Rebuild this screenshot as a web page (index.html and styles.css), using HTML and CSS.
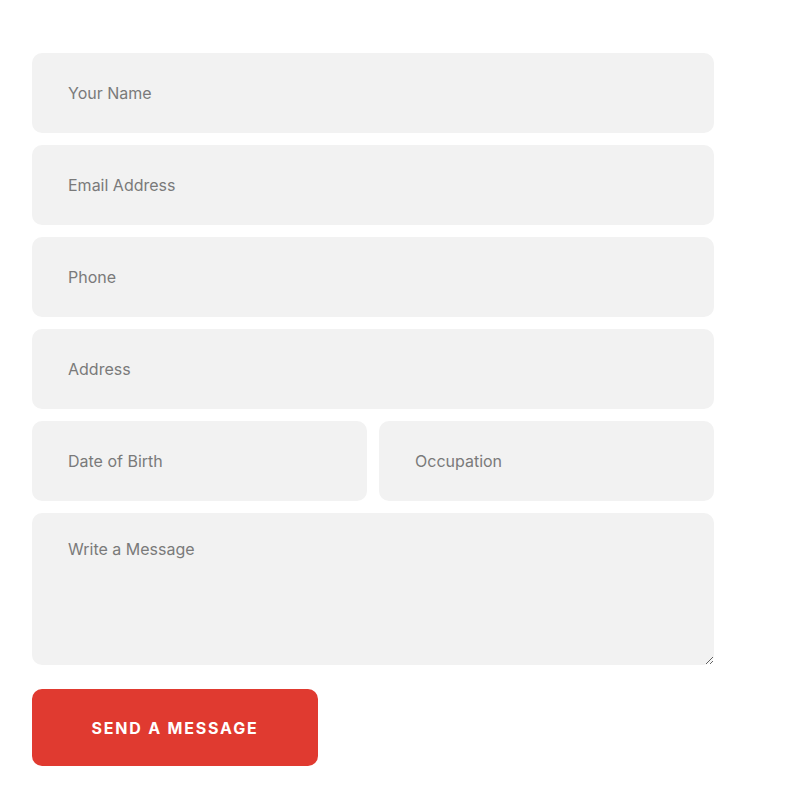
FILE: index.html
```html
<!DOCTYPE html>
<html>
<head>
<meta charset="utf-8">
<link rel="stylesheet" href="styles.css">
</head>
<body>
<form class="contact-form">
  <input class="field" type="text" placeholder="Your Name">
  <input class="field" type="email" placeholder="Email Address">
  <input class="field" type="text" placeholder="Phone">
  <input class="field" type="text" placeholder="Address">
  <div class="row">
    <input class="field" type="text" placeholder="Date of Birth">
    <input class="field" type="text" placeholder="Occupation">
  </div>
  <textarea class="field message" placeholder="Write a Message"></textarea>
  <button class="submit" type="button">Send a Message</button>
</form>
</body>
</html>
```
FILE: styles.css
```css
* { box-sizing: border-box; }
html, body { margin: 0; padding: 0; background: #fff; }
body { font-family: "Inter", "Noto Sans", sans-serif; }
.contact-form {
  width: 682px;
  margin: 53px 0 0 32px;
  display: flex;
  flex-direction: column;
  gap: 12px;
}
.field {
  display: block;
  width: 100%;
  height: 80px;
  border: none;
  border-radius: 10px;
  background: #f2f2f2;
  padding: 0 36px;
  font-family: "Inter", "Noto Sans", sans-serif;
  font-size: 16px;
  color: #555;
  outline: none;
}
.field::placeholder { color: #7a7a7a; opacity: 1; }
.row {
  display: grid;
  grid-template-columns: 1fr 1fr;
  gap: 12px;
}
.message {
  height: 152px;
  padding: 24px 36px;
  line-height: 24px;
  resize: vertical;
}
.submit {
  margin-top: 12px;
  width: 286px;
  height: 77px;
  border: none;
  border-radius: 10px;
  background: #e03a30;
  color: #fff;
  font-family: "Inter", "Noto Sans", sans-serif;
  font-weight: 700;
  font-size: 16px;
  letter-spacing: 1.8px;
  text-transform: uppercase;
  cursor: pointer;
}
```
